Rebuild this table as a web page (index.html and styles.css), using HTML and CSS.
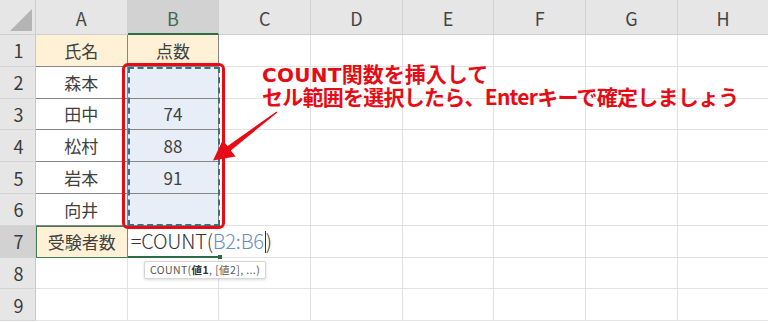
FILE: index.html
```html
<!DOCTYPE html>
<html lang="ja">
<head>
<meta charset="utf-8">
<link rel="stylesheet" href="styles.css">
</head>
<body>
<div class="wrap">
  <div class="sheet">
    <div class="corner"><svg width="36" height="35" viewBox="0 0 36 35"><polygon points="10,31 32,31 32,9" fill="#b4b4b4"/></svg></div>
    <div class="ch">A</div>
    <div class="ch ch-sel">B</div>
    <div class="ch">C</div>
    <div class="ch">D</div>
    <div class="ch">E</div>
    <div class="ch">F</div>
    <div class="ch">G</div>
    <div class="ch">H</div>

    <div class="rh">1</div>
    <div class="c t head">氏名</div>
    <div class="c t head">点数</div>
    <div class="c"></div><div class="c"></div><div class="c"></div><div class="c"></div><div class="c"></div><div class="c"></div>

    <div class="rh">2</div>
    <div class="c t">森本</div>
    <div class="c t sel"></div>
    <div class="c"></div><div class="c"></div><div class="c"></div><div class="c"></div><div class="c"></div><div class="c"></div>

    <div class="rh">3</div>
    <div class="c t">田中</div>
    <div class="c t sel">74</div>
    <div class="c"></div><div class="c"></div><div class="c"></div><div class="c"></div><div class="c"></div><div class="c"></div>

    <div class="rh">4</div>
    <div class="c t">松村</div>
    <div class="c t sel">88</div>
    <div class="c"></div><div class="c"></div><div class="c"></div><div class="c"></div><div class="c"></div><div class="c"></div>

    <div class="rh">5</div>
    <div class="c t">岩本</div>
    <div class="c t sel">91</div>
    <div class="c"></div><div class="c"></div><div class="c"></div><div class="c"></div><div class="c"></div><div class="c"></div>

    <div class="rh">6</div>
    <div class="c t">向井</div>
    <div class="c t sel"></div>
    <div class="c"></div><div class="c"></div><div class="c"></div><div class="c"></div><div class="c"></div><div class="c"></div>

    <div class="rh rh-sel">7</div>
    <div class="c t head a7">受験者数</div>
    <div class="c t b7"><span class="formula">=COUNT(<span class="ref">B2:B6</span><span class="caret"></span>)</span></div>
    <div class="c c7"></div><div class="c"></div><div class="c"></div><div class="c"></div><div class="c"></div><div class="c"></div>

    <div class="rh">8</div>
    <div class="c"></div><div class="c"></div><div class="c"></div><div class="c"></div><div class="c"></div><div class="c"></div><div class="c"></div><div class="c"></div>

    <div class="rh">9</div>
    <div class="c"></div><div class="c"></div><div class="c"></div><div class="c"></div><div class="c"></div><div class="c"></div><div class="c"></div><div class="c"></div>
  </div>

  <div class="ants"></div>
  <div class="redbox"></div>
  <svg class="arrow" width="768" height="323" viewBox="0 0 768 323">
    <polygon points="277.4,112.6 230.8,150.4 235.5,156.5 213,160.5 222.5,140.5 227.6,146 276.6,111.4" fill="#e60b14"/>
  </svg>
  <div class="note">
    <div class="l1"><span class="lat">COUNT</span>関数を挿入して</div>
    <div class="l2">セル範囲を選択したら、Enterキーで確定しましょう</div>
  </div>
  <div class="tip">COUNT(<b>値1</b>, [値2], ...)</div>
</div>
</body>
</html>
```
FILE: styles.css
```css
* { box-sizing: border-box; }
html, body { margin: 0; padding: 0; background: #fff; overflow: hidden; }
.wrap { position: relative; width: 768px; height: 323px; overflow: hidden;
  font-family: "Noto Sans CJK JP", "Noto Sans", sans-serif; color: #333; }
.sheet { display: grid; grid-template-columns: 36px repeat(8, 91.7px);
  grid-template-rows: 35px repeat(9, 31.8px); }
.corner { background: #e6e6e6; border-right: 1px solid #cfcfcf; border-bottom: 1px solid #cfcfcf; }
.corner svg { display: block; }
.ch { background: #e6e6e6; border-right: 1px solid #d2d2d2; border-bottom: 1px solid #cfcfcf;
  display: flex; align-items: center; justify-content: center; font-size: 18px; color: #444; padding-top: 2px; }
.ch-sel { background: #d2d2d2; color: #3d6b4f; border-bottom: 2px solid #2f6b45; }
.rh { background: #e6e6e6; border-right: 1px solid #c8c8c8; border-bottom: 1px solid #d4d4d4;
  display: flex; align-items: center; justify-content: center; font-size: 18px; color: #3a3a3a; padding-left: 2px; }
.rh-sel { background: #d2d2d2; }
.c { border-right: 1px solid #e2e2e2; border-bottom: 1px solid #e2e2e2;
  display: flex; align-items: center; justify-content: center; font-size: 17px; color: #404040; }
.t { border-right-color: #858585; border-bottom-color: #858585; }
.head { background: #fff1d6; }
.sel { background: #e8eef8; }
.a7 { border: 1px solid #3f7d51; border-right-color: #858585; }
.b7 { justify-content: flex-start; overflow: visible; position: relative; z-index: 2;
  border-bottom: 2px solid #2f6b45; border-right: none; }
.b7::after { content: ""; position: absolute; right: -3px; bottom: -3px; width: 4px; height: 4px; background: #2f6b45; }
.c7 { border-bottom-color: #e2e2e2; }
.formula { white-space: nowrap; font-size: 20px; color: #333; padding-left: 3px; letter-spacing: -0.2px; font-weight: 300; }
.ref { color: #6a8fc6; }
.caret { display: inline-block; width: 1px; height: 22px; background: #333; vertical-align: -4px; margin: 0 0 0 1px; }
.ants { position: absolute; left: 128px; top: 67px; width: 92px; height: 159px;
  border: 2px dashed #3e6f7e; }
.redbox { position: absolute; left: 122px; top: 63px; width: 103px; height: 166px;
  border: 3px solid #e60b14; border-radius: 6px; }
.arrow { position: absolute; left: 0; top: 0; }
.note { position: absolute; left: 262px; top: 62px; font-weight: bold; font-size: 21px;
  color: #e60b14; white-space: nowrap; display: flex; flex-direction: column; }
.note .l1, .note .l2 { height: 23px; line-height: 23px; }
.lat { font-family: "DejaVu Sans", sans-serif; font-size: 20px; letter-spacing: 0.3px; }
.note .l2 { letter-spacing: -0.75px; }
.tip { position: absolute; left: 144px; top: 261px; height: 18px; padding: 0 5px;
  background: #fff; border: 1px solid #d6d6d6; border-radius: 2px; box-shadow: 0 1px 3px rgba(0,0,0,0.15);
  font-size: 10.5px; line-height: 16px; color: #555; white-space: nowrap; letter-spacing: 0.4px; }
.tip b { color: #333; }
```
